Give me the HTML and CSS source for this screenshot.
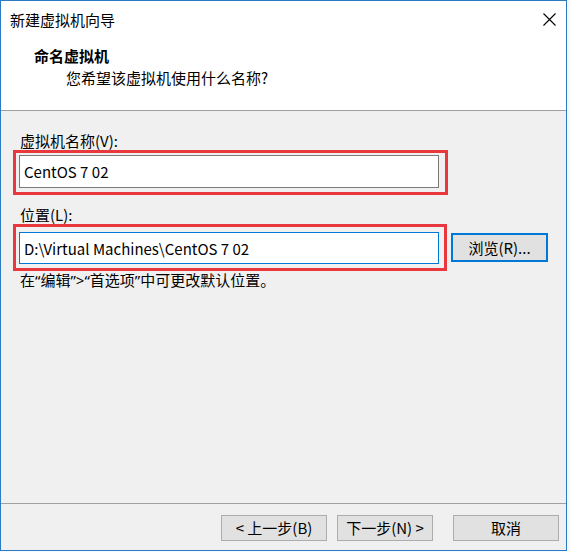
FILE: index.html
```html
<!DOCTYPE html>
<html lang="zh-CN">
<head>
    <meta charset="UTF-8">
    <title>新建虚拟机向导</title>
    <link rel="stylesheet" href="styles.css">
</head>
<body>
    <div class="window">
        <div class="titlebar">
            <span class="title">新建虚拟机向导</span>
            <svg class="close" width="13" height="13" viewBox="0 0 13 13">
                <path d="M0.5 0.5 L12.5 12.5 M12.5 0.5 L0.5 12.5" stroke="#000" stroke-width="1.1" fill="none"/>
            </svg>
        </div>

        <div class="header">
            <h1>命名虚拟机</h1>
            <p>您希望该虚拟机使用什么名称?</p>
        </div>

        <div class="content">
            <div class="label">虚拟机名称(V):</div>
            <div class="mark mark-name">
                <input type="text" class="field" value="CentOS 7 02">
            </div>

            <div class="label label-path">位置(L):</div>
            <div class="path-row">
                <div class="mark mark-path">
                    <input type="text" class="field field-focus" value="D:\Virtual Machines\CentOS 7 02">
                </div>
                <button class="btn btn-browse">浏览(R)...</button>
            </div>
            <div class="hint">在<span class="latin">“</span>编辑<span class="latin">”&gt;“</span>首选项<span class="latin">”</span>中可更改默认位置。</div>
        </div>

        <div class="footer">
            <button class="btn btn-back">&lt; 上一步(B)</button>
            <button class="btn btn-next">下一步(N) &gt;</button>
            <button class="btn btn-cancel">取消</button>
        </div>
    </div>
</body>
</html>
```

FILE: styles.css
```css
* {
    box-sizing: border-box;
}
body {
    margin: 0;
    background: #f4f9fd;
    font-family: "Noto Sans CJK SC", sans-serif;
    font-size: 15px;
    color: #000;
}
.window {
    width: 567px;
    height: 551px;
    border: 1px solid #2b7bc4;
    background: #f0f0f0;
    display: flex;
    flex-direction: column;
}
.titlebar {
    height: 36px;
    background: #fff;
    display: flex;
    align-items: center;
    justify-content: space-between;
    padding: 1px 10px 0 9px;
}
.close {
    display: block;
}
.header {
    background: #fff;
    padding: 8px 0 21px 33px;
    border-bottom: 1px solid #a0a0a0;
}
.header h1 {
    margin: 0;
    font-size: 15px;
    font-weight: bold;
    line-height: 22px;
}
.header p {
    margin: 0 0 0 32px;
    line-height: 22px;
}
.content {
    flex: 1;
    padding: 21px 0 0 12px;
}
.label {
    line-height: 18px;
    padding-left: 7px;
}
.label-path {
    margin-top: 11px;
}
.mark {
    border: 3px solid #e8383d;
}
.mark-name {
    width: 435px;
    padding: 2px 6px 4px 3px;
}
.mark-path {
    width: 434px;
    padding: 5px 5px 4px 3px;
}
.field {
    display: block;
    width: 420px;
    height: 33px;
    border: 1px solid #7a7a7a;
    background: #fff;
    padding: 0 4px;
    margin: 0;
    font-family: inherit;
    font-size: 15px;
    color: #000;
    outline: none;
}
.field-focus {
    height: 32px;
    border-color: #0078d7;
}
.path-row {
    display: flex;
    align-items: flex-start;
}
.btn {
    height: 26px;
    border: 1px solid #adadad;
    background: #e1e1e1;
    font-family: inherit;
    font-size: 15px;
    color: #000;
    padding: 0;
    line-height: 22px;
}
.btn-browse {
    width: 97px;
    height: 29px;
    margin: 9px 0 0 4px;
    border: 2px solid #0078d7;
}
.hint {
    line-height: 18px;
    padding-left: 7px;
}
.latin {
    font-family: "Noto Sans", sans-serif;
}
.footer {
    height: 47px;
    border-top: 1px solid #a0a0a0;
    display: flex;
    justify-content: flex-end;
    align-items: flex-start;
    padding: 11px 7px 0 0;
}
.btn-back {
    width: 106px;
}
.btn-next {
    width: 96px;
    margin-left: 10px;
}
.btn-cancel {
    width: 106px;
    margin-left: 20px;
}
```
